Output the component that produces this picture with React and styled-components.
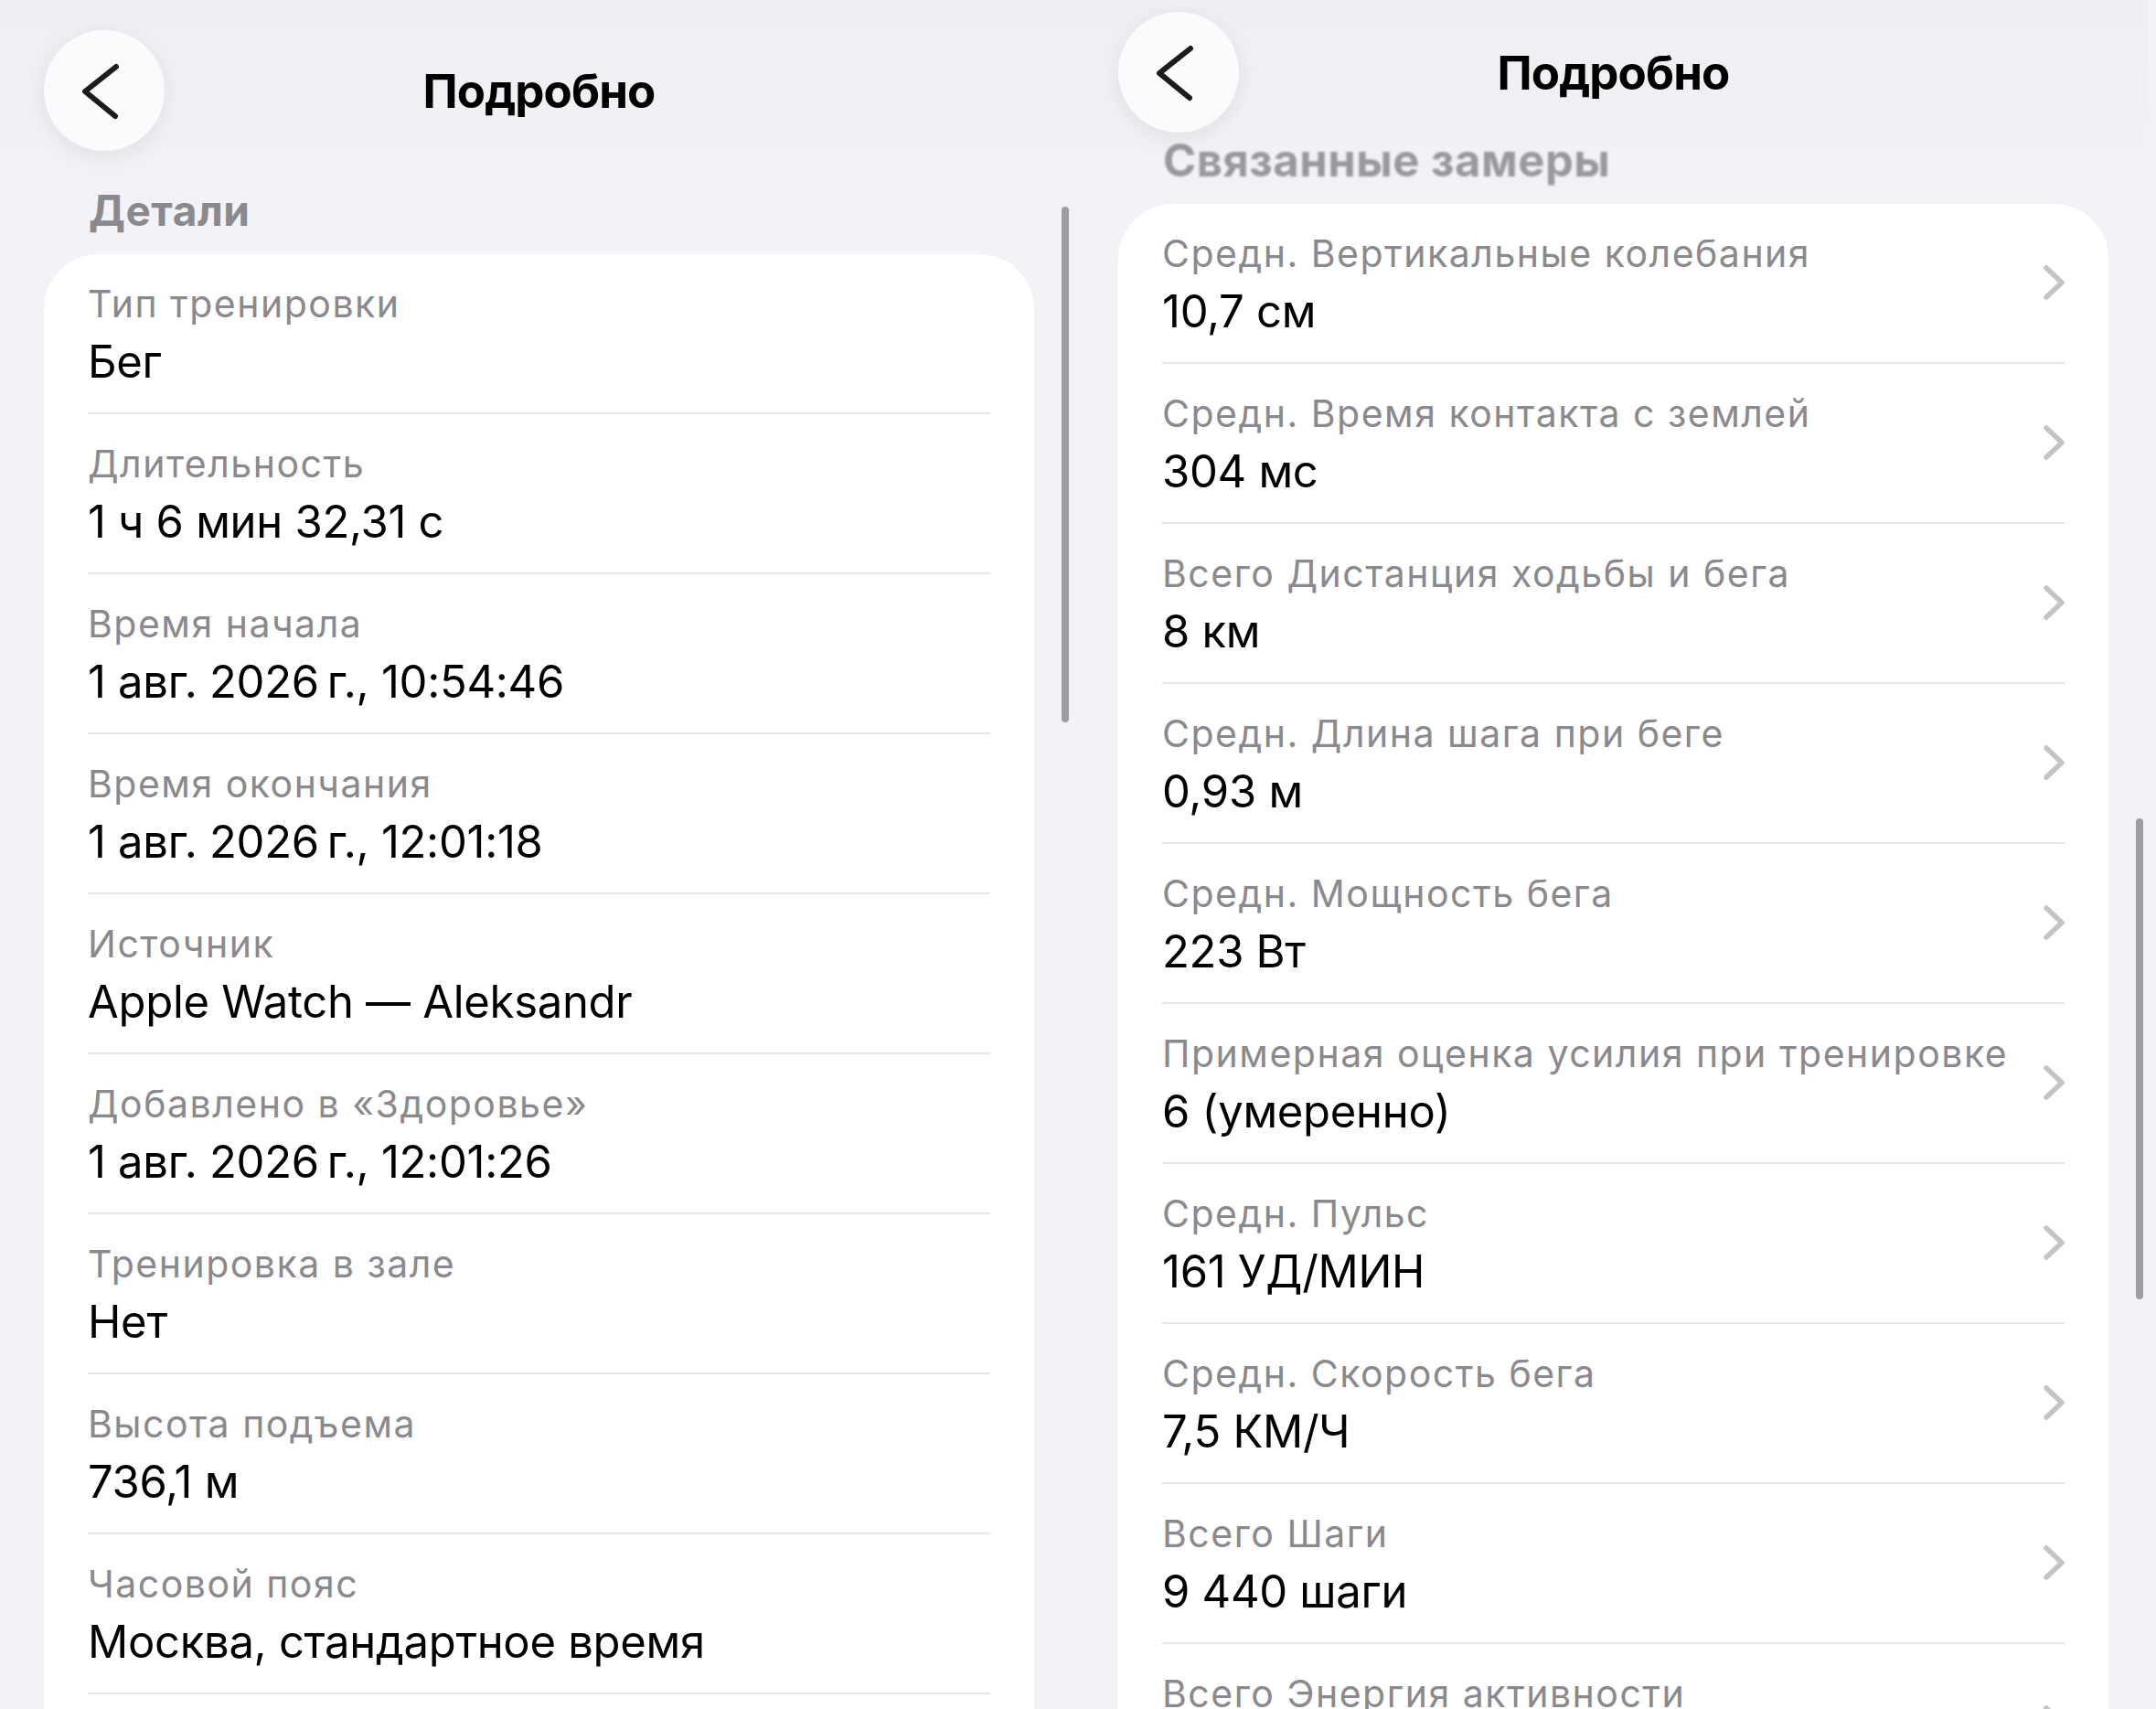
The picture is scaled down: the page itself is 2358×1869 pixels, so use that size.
import React from 'react';
import styled, { createGlobalStyle } from 'styled-components';

const GlobalStyle = createGlobalStyle`
  html, body {
    margin: 0;
    padding: 0;
  }
  body {
    background: #f2f2f7;
    font-family: Inter, "Noto Sans", sans-serif;
    -webkit-font-smoothing: antialiased;
  }
`;

const Screen = styled.div`
  display: grid;
  grid-template-columns: 1175px 1175px;
  width: 2358px;
  height: 1869px;
  overflow: hidden;
  background: #f2f2f7;
`;

const Panel = styled.section`
  position: relative;
  display: flex;
  flex-direction: column;
  padding-top: ${(p) => p.$navTop}px;
  overflow: hidden;
  background: linear-gradient(#eeeef3, #f2f2f7 240px);
`;

const NavBar = styled.header`
  display: grid;
  grid-template-columns: 132px 1fr 132px;
  align-items: center;
  height: 132px;
  padding: 0 44px 0 48px;
`;

const BackButton = styled.button`
  width: 132px;
  height: 132px;
  padding: 0;
  border: none;
  border-radius: 50%;
  background: #fbfbfd;
  box-shadow: 0 6px 26px rgba(0, 0, 0, 0.07);
  display: flex;
  align-items: center;
  justify-content: center;
`;

const Title = styled.h1`
  margin: 0;
  text-align: center;
  font-size: 51px;
  font-weight: 700;
  letter-spacing: -0.9px;
  color: #000;
`;

const SectionTitle = styled.h2`
  margin: ${(p) => p.$gap}px 0 21px 97px;
  font-size: ${(p) => p.$size}px;
  line-height: 53px;
  font-weight: 700;
  letter-spacing: 0.5px;
  color: #8a8a8e;
  ${(p) => p.$faded && 'filter: blur(1.3px); opacity: 0.85;'}
`;

const Card = styled.div`
  margin: 0 44px 0 48px;
  padding: 0 48px 80px;
  background: #fff;
  border-radius: 60px 60px 0 0;
`;

const Row = styled.div`
  display: flex;
  align-items: center;
  gap: 24px;
  padding: 31px 0 25px;
  border-bottom: 2px solid #e5e5ea;
`;

const Texts = styled.div`
  flex: 1;
  min-width: 0;
  display: flex;
  flex-direction: column;
  gap: 11px;
`;

const Label = styled.div`
  font-size: 41px;
  line-height: 46px;
  letter-spacing: 1.5px;
  color: #8a8a8e;
  white-space: nowrap;
`;

const Value = styled.div`
  font-size: 49px;
  line-height: 60px;
  letter-spacing: -0.3px;
  color: #000;
  white-space: nowrap;
`;

const ChevronSlot = styled.div`
  flex-shrink: 0;
  display: flex;
  margin: 0 -2px 8px 0;
`;

const ScrollIndicator = styled.div`
  position: absolute;
  right: 6px;
  top: ${(p) => p.$top}px;
  width: 8px;
  height: ${(p) => p.$height}px;
  border-radius: 4px;
  background: #9c9ca1;
`;

const BackChevron = () => (
  <svg width="132" height="132" viewBox="0 0 132 132">
    <polyline
      points="79,40 45,67 78,94"
      fill="none"
      stroke="#1c1c1e"
      strokeWidth="6"
      strokeLinecap="round"
      strokeLinejoin="round"
    />
  </svg>
);

const Disclosure = () => (
  <ChevronSlot>
    <svg width="26" height="40" viewBox="0 0 26 40">
      <polyline
        points="4,4 21,20 4,36"
        fill="none"
        stroke="#c4c4c8"
        strokeWidth="5.5"
        strokeLinecap="round"
        strokeLinejoin="round"
      />
    </svg>
  </ChevronSlot>
);

const nb = '\u202F';

const details = [
  ['Тип тренировки', 'Бег'],
  ['Длительность', '1 ч 6 мин 32,31 с'],
  ['Время начала', `1 авг. 2026${nb}г., 10:54:46`],
  ['Время окончания', `1 авг. 2026${nb}г., 12:01:18`],
  ['Источник', 'Apple Watch — Aleksandr'],
  ['Добавлено в «Здоровье»', `1 авг. 2026${nb}г., 12:01:26`],
  ['Тренировка в зале', 'Нет'],
  ['Высота подъема', '736,1 м'],
  ['Часовой пояс', 'Москва, стандартное время'],
];

const related = [
  ['Средн. Вертикальные колебания', '10,7 см'],
  ['Средн. Время контакта с землей', '304 мс'],
  ['Всего Дистанция ходьбы и бега', '8 км'],
  ['Средн. Длина шага при беге', '0,93 м'],
  ['Средн. Мощность бега', '223 Вт'],
  ['Примерная оценка усилия при тренировке', '6 (умеренно)'],
  ['Средн. Пульс', '161 УД/МИН'],
  ['Средн. Скорость бега', '7,5 КМ/Ч'],
  ['Всего Шаги', '9\u00A0440 шаги'],
  ['Всего Энергия активности', ''],
];

function Header() {
  return (
    <NavBar>
      <BackButton aria-label="Назад">
        <BackChevron />
      </BackButton>
      <Title>Подробно</Title>
      <span />
    </NavBar>
  );
}

export default function App() {
  return (
    <>
      <GlobalStyle />
      <Screen>
        <Panel $navTop={33}>
          <Header />
          <SectionTitle $gap={39} $size={46}>
            Детали
          </SectionTitle>
          <Card>
            {details.map(([label, value]) => (
              <Row key={label}>
                <Texts>
                  <Label>{label}</Label>
                  <Value>{value}</Value>
                </Texts>
              </Row>
            ))}
          </Card>
          <ScrollIndicator $top={226} $height={564} />
        </Panel>

        <Panel $navTop={13}>
          <Header />
          <SectionTitle $gap={4} $size={49} $faded>
            Связанные замеры
          </SectionTitle>
          <Card>
            {related.map(([label, value]) => (
              <Row key={label}>
                <Texts>
                  <Label>{label}</Label>
                  <Value>{value || '\u00A0'}</Value>
                </Texts>
                <Disclosure />
              </Row>
            ))}
          </Card>
          <ScrollIndicator $top={895} $height={526} />
        </Panel>
      </Screen>
    </>
  );
}
